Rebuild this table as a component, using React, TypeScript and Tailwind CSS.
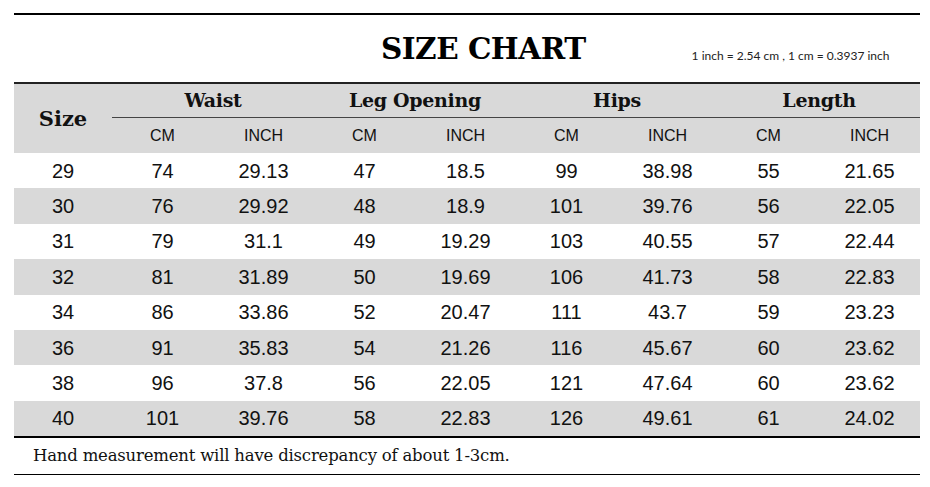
import React from 'react';

const rows = [
  ['29', '74', '29.13', '47', '18.5', '99', '38.98', '55', '21.65'],
  ['30', '76', '29.92', '48', '18.9', '101', '39.76', '56', '22.05'],
  ['31', '79', '31.1', '49', '19.29', '103', '40.55', '57', '22.44'],
  ['32', '81', '31.89', '50', '19.69', '106', '41.73', '58', '22.83'],
  ['34', '86', '33.86', '52', '20.47', '111', '43.7', '59', '23.23'],
  ['36', '91', '35.83', '54', '21.26', '116', '45.67', '60', '23.62'],
  ['38', '96', '37.8', '56', '22.05', '121', '47.64', '60', '23.62'],
  ['40', '101', '39.76', '58', '22.83', '126', '49.61', '61', '24.02'],
];

const groups = ['Waist', 'Leg Opening', 'Hips', 'Length'];

const serif = "font-['DejaVu_Serif','Liberation_Serif',serif]";
const arial = "font-['Liberation_Sans',Arial,sans-serif]";

export default function App() {
  return (
    <div className="w-[930px] h-[487px] bg-white pt-[13px] pl-[14px]">
      <div className="w-[906px]">
        {/* title bar */}
        <div className="border-t-[2px] border-black h-[69px] flex items-center">
          <h1 className={`${serif} font-bold text-[29.5px] text-black tracking-[-0.5px] ml-[367px] mt-[2px]`}>SIZE CHART</h1>
          <span className="font-['Lato',sans-serif] text-[12px] text-[#222] ml-[106px] mt-[14px]">
            1 inch = 2.54 cm , 1 cm = 0.3937 inch
          </span>
        </div>

        {/* header */}
        <div className="border-t-[2px] border-[#222] bg-[#d9d9d9] grid grid-cols-[98px_repeat(8,101px)] grid-rows-[34px_35px]">
          <div className={`row-span-2 flex items-center justify-center ${serif} font-bold text-[21px] text-[#111]`}>Size</div>
          {groups.map((g) => (
            <div
              key={g}
              className={`col-span-2 flex items-center justify-center border-b border-[#444] ${serif} font-bold text-[19px] text-[#111] tracking-[-0.3px]`}
            >
              {g}
            </div>
          ))}
          {groups.map((g) => (
            <React.Fragment key={g}>
              <div className={`flex items-center justify-center ${arial} text-[16px] text-[#111]`}>CM</div>
              <div className={`flex items-center justify-center ${arial} text-[16px] text-[#111]`}>INCH</div>
            </React.Fragment>
          ))}
        </div>

        {/* body */}
        <div className="border-b-[2px] border-black">
          {rows.map((r, i) => (
            <div
              key={r[0]}
              className={`grid grid-cols-[98px_repeat(8,101px)] h-[35.4px] ${i % 2 === 1 ? 'bg-[#d9d9d9]' : 'bg-white'}`}
            >
              {r.map((c, j) => (
                <div key={j} className={`flex items-center justify-center ${arial} text-[20px] text-[#111]`}>
                  {c}
                </div>
              ))}
            </div>
          ))}
        </div>

        {/* footer */}
        <div className="border-b border-black h-[37px] flex items-center pl-[19px]">
          <span className={`${serif} text-[16.5px] text-[#111] tracking-[-0.2px]`}>
            Hand measurement will have discrepancy of about 1-3cm.
          </span>
        </div>
      </div>
    </div>
  );
}
